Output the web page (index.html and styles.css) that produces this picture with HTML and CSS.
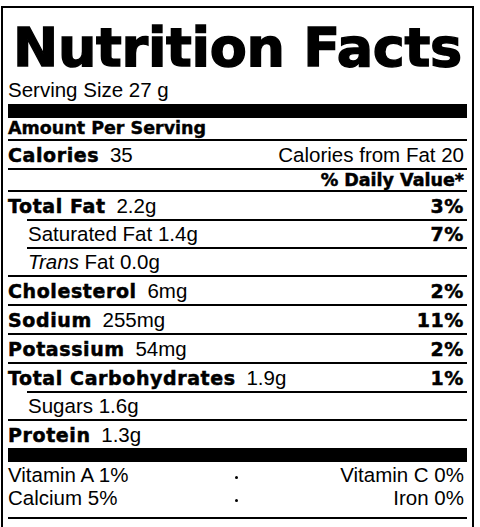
FILE: index.html
```
<!DOCTYPE html>
<html lang="en">
<head>
  <meta charset="UTF-8" />
  <meta name="viewport" content="width=device-width, initial-scale=1" />
  <title>Nutrition Facts</title>
  <link rel="stylesheet" href="styles.css">
</head>
<body>
  <div class="label">
    <h1 class="title">Nutrition Facts</h1>
    <p class="serving">Serving Size 27 g</p>
    <div class="bar"></div>
    <div class="amount">Amount Per Serving</div>

    <div class="row"><span><b>Calories</b> 35</span><span>Calories from Fat 20</span></div>
    <div class="row dv"><b>% Daily Value*</b></div>

    <!-- nutrients: name + amount on the left, daily value on the right -->
    <div class="row"><span><b>Total Fat</b> 2.2g</span><b>3%</b></div>
    <div class="row sub"><span>Saturated Fat 1.4g</span><b>7%</b></div>
    <div class="row sub"><span><i>Trans</i> Fat 0.0g</span></div>
    <div class="row"><span><b>Cholesterol</b> 6mg</span><b>2%</b></div>
    <div class="row"><span><b>Sodium</b> 255mg</span><b>11%</b></div>
    <div class="row"><span><b>Potassium</b> 54mg</span><b>2%</b></div>
    <div class="row"><span><b>Total Carbohydrates</b> 1.9g</span><b>1%</b></div>
    <div class="row sub"><span>Sugars 1.6g</span></div>
    <div class="row"><span><b>Protein</b> 1.3g</span></div>
    <div class="bar"></div>

    <div class="vitamins">
      <span>Vitamin A 1%</span><span class="dot"></span><span class="right">Vitamin C 0%</span>
      <span>Calcium 5%</span><span class="dot"></span><span class="right">Iron 0%</span>
    </div>
  </div>
</body>
</html>
```

FILE: styles.css
```
html, body {
  margin: 0;
  padding: 0;
  background: #fff;
  overflow: hidden;
}
body {
  padding: 6px 0 0 1px;
  font-family: "Liberation Sans", Arial, sans-serif;
  font-size: 20.5px;
  color: #000;
}
.label {
  width: 473px;
  min-height: 521px;
  box-sizing: border-box;
  border: 2px solid #000;
  border-bottom: none;
  padding: 0 5px;
}
b {
  font-family: "DejaVu Sans", sans-serif;
  font-weight: bold;
  font-size: 19px;
  letter-spacing: 0.6px;
  -webkit-text-stroke: 0.5px #000;
}
.row span b {
  margin-right: 5px;
}
.title {
  margin: 13px 0 0;
  padding-left: 5px;
  font-family: "DejaVu Sans", sans-serif;
  font-weight: bold;
  font-size: 54px;
  line-height: 54px;
  letter-spacing: -0.3px;
  -webkit-text-stroke: 1.4px #000;
  white-space: nowrap;
}
.serving {
  margin: 3px 0 0;
  line-height: 24px;
}
.bar {
  height: 14px;
  background: #000;
  margin-top: 2px;
}
.row + .bar {
  margin-top: 0;
}
.amount {
  height: 21px;
  line-height: 21px;
  font-family: "DejaVu Sans", sans-serif;
  font-weight: bold;
  font-size: 17.5px;
  -webkit-text-stroke: 0.4px #000;
}
.row {
  display: flex;
  justify-content: space-between;
  align-items: baseline;
  height: 27px;
  line-height: 27px;
  padding-right: 3px;
  border-top: 2px solid #000;
  white-space: nowrap;
}
.row.dv {
  height: 20px;
  line-height: 20px;
  justify-content: flex-end;
}
.row.dv b {
  font-size: 17.5px;
  letter-spacing: 0;
}
.row.sub {
  height: 26px;
  line-height: 26px;
  margin-left: 19px;
  padding-left: 1px;
}
.row i {
  font-style: italic;
}
.vitamins {
  display: grid;
  grid-template-columns: 1fr auto 1fr;
  line-height: 23px;
  padding: 1px 3px 8px 0;
  border-bottom: 2px solid #000;
}
.vitamins .dot {
  align-self: center;
  margin-top: 5px;
  width: 3px;
  height: 3px;
  border-radius: 50%;
  background: #000;
}
.vitamins .right {
  text-align: right;
}
```
